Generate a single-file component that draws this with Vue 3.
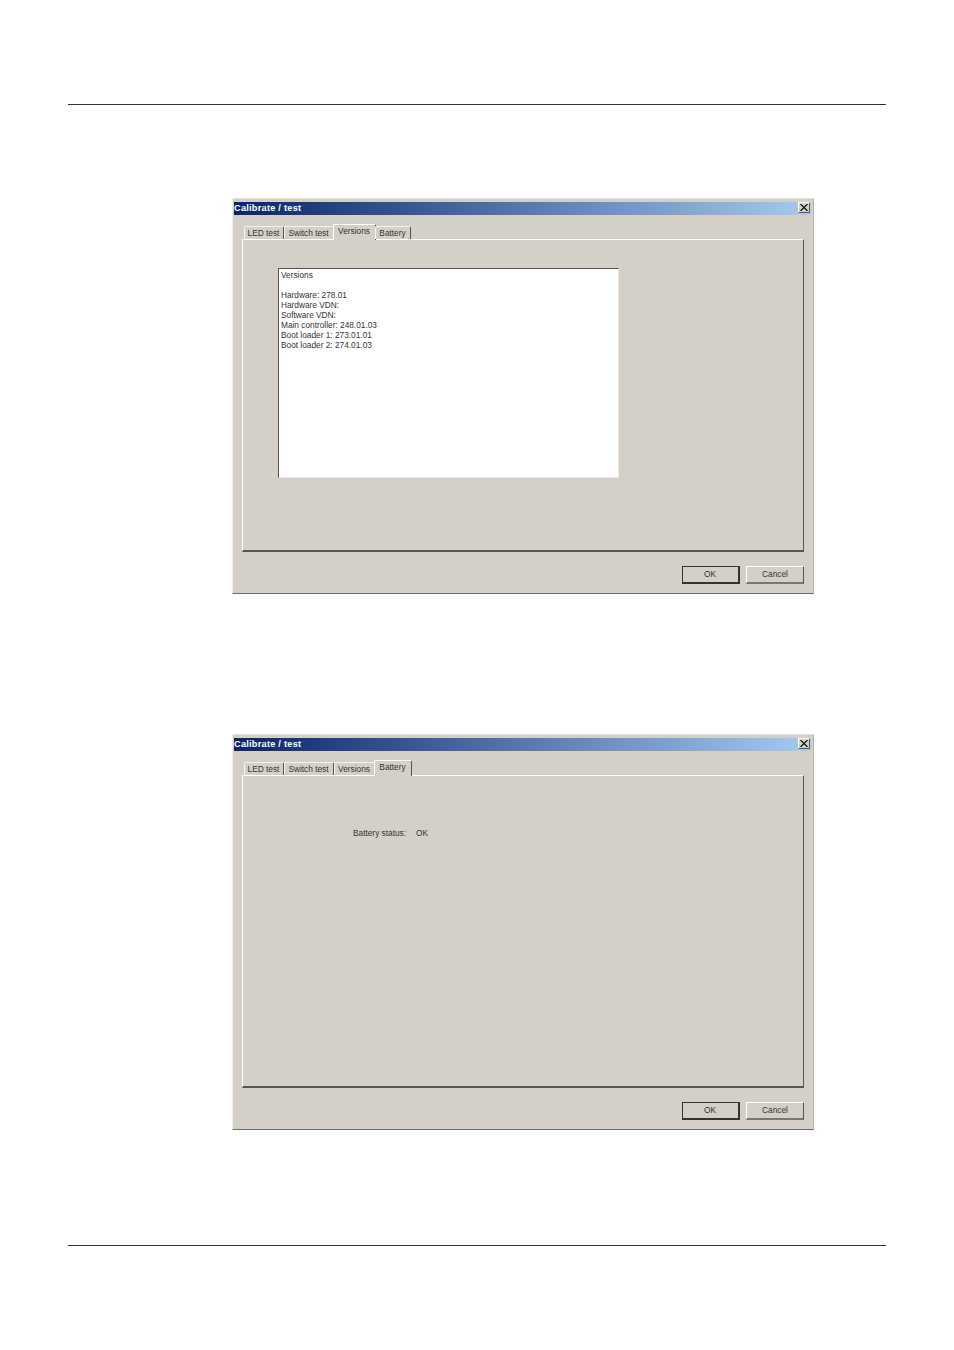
<template>
  <div class="page">
    <div class="rule top-rule"></div>

    <div
      v-for="(dlg, i) in dialogs"
      :key="dlg.active"
      class="dialog"
      :class="{ second: i === 1 }"
    >
      <div class="titlebar">
        <span class="title">Calibrate / test</span>
        <span class="close">
          <svg width="8" height="7" viewBox="0 0 8 7">
            <path d="M0.5 0 L7.5 7 M7.5 0 L0.5 7" stroke="#111" stroke-width="1.2" fill="none" />
          </svg>
        </span>
      </div>

      <div class="tabs">
        <div
          v-for="t in tabs"
          :key="t.name"
          class="tab"
          :class="{ active: t.name === dlg.active }"
          :style="{ width: (t.name === dlg.active ? t.width + 2 : t.width) + 'px' }"
        >
          {{ t.name }}
        </div>
      </div>

      <div class="panel">
        <div v-if="dlg.active === 'Versions'" class="listbox">
          <div v-for="(line, n) in versionLines" :key="n" class="line">{{ line }}</div>
        </div>
        <div v-else class="status">
          <span>Battery status:</span>
          <span class="status-value">OK</span>
        </div>
      </div>

      <div class="actions">
        <button type="button" class="btn default">OK</button>
        <button type="button" class="btn">Cancel</button>
      </div>
    </div>

    <div class="rule bottom-rule"></div>
  </div>
</template>

<script setup>
const tabs = [
  { name: 'LED test', width: 40 },
  { name: 'Switch test', width: 50 },
  { name: 'Versions', width: 41 },
  { name: 'Battery', width: 36 },
]

const dialogs = [{ active: 'Versions' }, { active: 'Battery' }]

const versionLines = [
  'Versions',
  '\u00a0',
  'Hardware: 278.01',
  'Hardware VDN:',
  'Software VDN:',
  'Main controller: 248.01.03',
  'Boot loader 1: 273.01.01',
  'Boot loader 2: 274.01.03',
]
</script>

<style>
html,
body {
  background: #fff;
}
</style>

<style scoped>
.page {
  width: 954px;
  height: 1350px;
  overflow: hidden;
  padding-top: 104px;
  box-sizing: border-box;
  font-family: "Liberation Sans", Arial, sans-serif;
  font-size: 8.3px;
  color: #333;
}

.rule {
  height: 1px;
  margin: 0 68px;
  background: #333;
}

.dialog {
  width: 582px;
  height: 396px;
  box-sizing: border-box;
  margin: 93px 0 0 232px;
  padding: 3px 2px 0 1px;
  background: #d4d0c8;
  border-top: 1px solid #e4e2dd;
  border-left: 1px solid #eeede9;
  border-right: 1px solid #b5b2ab;
  border-bottom: 1px solid #6b6a66;
}

.dialog.second {
  margin-top: 140px;
}

.bottom-rule {
  margin-top: 115px;
}

.titlebar {
  height: 13px;
  display: flex;
  align-items: flex-start;
  justify-content: space-between;
  padding-right: 1px;
  background: linear-gradient(90deg, #0a246a, #a6caf0);
}

.title {
  color: #fff;
  font-weight: bold;
  font-size: 9.2px;
  line-height: 12px;
  letter-spacing: 0.25px;
}

.close {
  width: 12px;
  height: 11px;
  display: flex;
  align-items: center;
  justify-content: center;
  background: #d4d0c8;
  border-top: 1px solid #fff;
  border-left: 1px solid #fff;
  border-right: 1px solid #555;
  border-bottom: 1px solid #555;
  box-sizing: border-box;
}

.tabs {
  display: flex;
  align-items: flex-end;
  height: 24px;
  margin-left: 10px;
  position: relative;
  z-index: 1;
}

.tab {
  height: 13px;
  box-sizing: border-box;
  padding-right: 1px;
  text-align: center;
  line-height: 13px;
  white-space: nowrap;
  color: #333;
  border-top: 1px solid #f4f3f0;
  border-left: 1px solid #f4f3f0;
  border-right: 1.5px solid #555;
  border-radius: 2px 2px 0 0;
}

.tab.active {
  height: 16px;
  line-height: 13px;
  margin: 0 -1px -1px;
  background: #d4d0c8;
  border-top-color: #fff;
  border-left-color: #fff;
}

.panel {
  width: 562px;
  height: 313px;
  box-sizing: border-box;
  margin-left: 8px;
  padding: 28px 0 0 35px;
  border-top: 1px solid #fff;
  border-left: 1px solid #fff;
  border-right: 1px solid #555;
  border-bottom: 2px solid #555;
}

.listbox {
  width: 341px;
  height: 210px;
  box-sizing: border-box;
  padding: 1px 2px;
  background: #fff;
  border-top: 1px solid #555;
  border-left: 1px solid #555;
  border-right: 1px solid #e8e7e3;
  border-bottom: 1px solid #e8e7e3;
}

.line {
  height: 10px;
  line-height: 10px;
  white-space: nowrap;
}

.status {
  margin: 24px 0 0 75px;
  line-height: 10px;
}

.status-value {
  margin-left: 10px;
}

.actions {
  display: flex;
  justify-content: flex-end;
  gap: 6px;
  margin: 14px 7px 0 0;
}

.btn {
  width: 58px;
  height: 18px;
  padding: 0 0 1px;
  box-sizing: border-box;
  font: inherit;
  color: #333;
  background: #d4d0c8;
  border-top: 1px solid #fff;
  border-left: 1px solid #fff;
  border-right: 1px solid #555;
  border-bottom: 2px solid #777;
}

.btn.default {
  padding-right: 1px;
  border: 1px solid #333;
  border-right-width: 2px;
  border-bottom-width: 2px;
}
</style>
